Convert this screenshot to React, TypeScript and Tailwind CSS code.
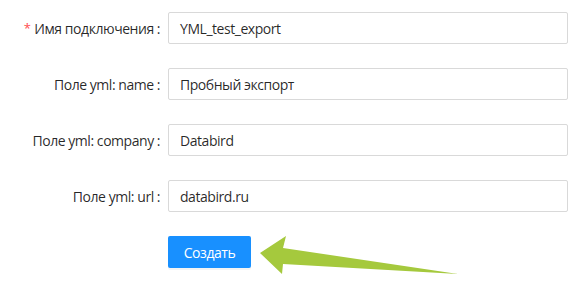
import React from "react";

const rows = [
  { label: "Имя подключения", value: "YML_test_export", required: true },
  { label: "Поле yml: name", value: "Пробный экспорт" },
  { label: "Поле yml: company", value: "Databird" },
  { label: "Поле yml: url", value: "databird.ru" },
];

export default function App() {
  return (
    <div
      className="relative w-[588px] h-[282px] bg-white pt-[12px] pr-[20px] text-[14px] tracking-[-0.45px] text-[rgba(0,0,0,0.85)]"
      style={{ fontFamily: '"Open Sans", "Noto Sans", sans-serif' }}
    >
      {rows.map((r) => (
        <div key={r.label} className="flex items-center h-[32px] mb-[24px]">
          <div className="w-[168px] shrink-0 flex justify-end items-center pr-[8px]">
            {r.required && (
              <span className="text-[#ff4d4f] mr-[4px] text-[13px] leading-none">*</span>
            )}
            <span className="whitespace-nowrap">{r.label}</span>
            <span className="ml-[3px]">:</span>
          </div>
          <div className="flex-1 h-[32px] border border-[#d9d9d9] rounded-[2px] px-[11px] flex items-center">
            {r.value}
          </div>
        </div>
      ))}
      <div className="flex">
        <div className="w-[168px] shrink-0" />
        <button className="h-[32px] w-[83px] bg-[#1890ff] text-white rounded-[2px] text-[14px] flex items-center justify-center shadow-[0_2px_0_rgba(0,0,0,0.045)]">
          Создать
        </button>
      </div>
      <svg
        className="absolute left-0 top-0"
        width="588"
        height="282"
        viewBox="0 0 588 282"
      >
        <polygon
          points="260,253 286,236 283,248 458,274 283,264 282,274"
          fill="#a5c93d"
        />
      </svg>
    </div>
  );
}
